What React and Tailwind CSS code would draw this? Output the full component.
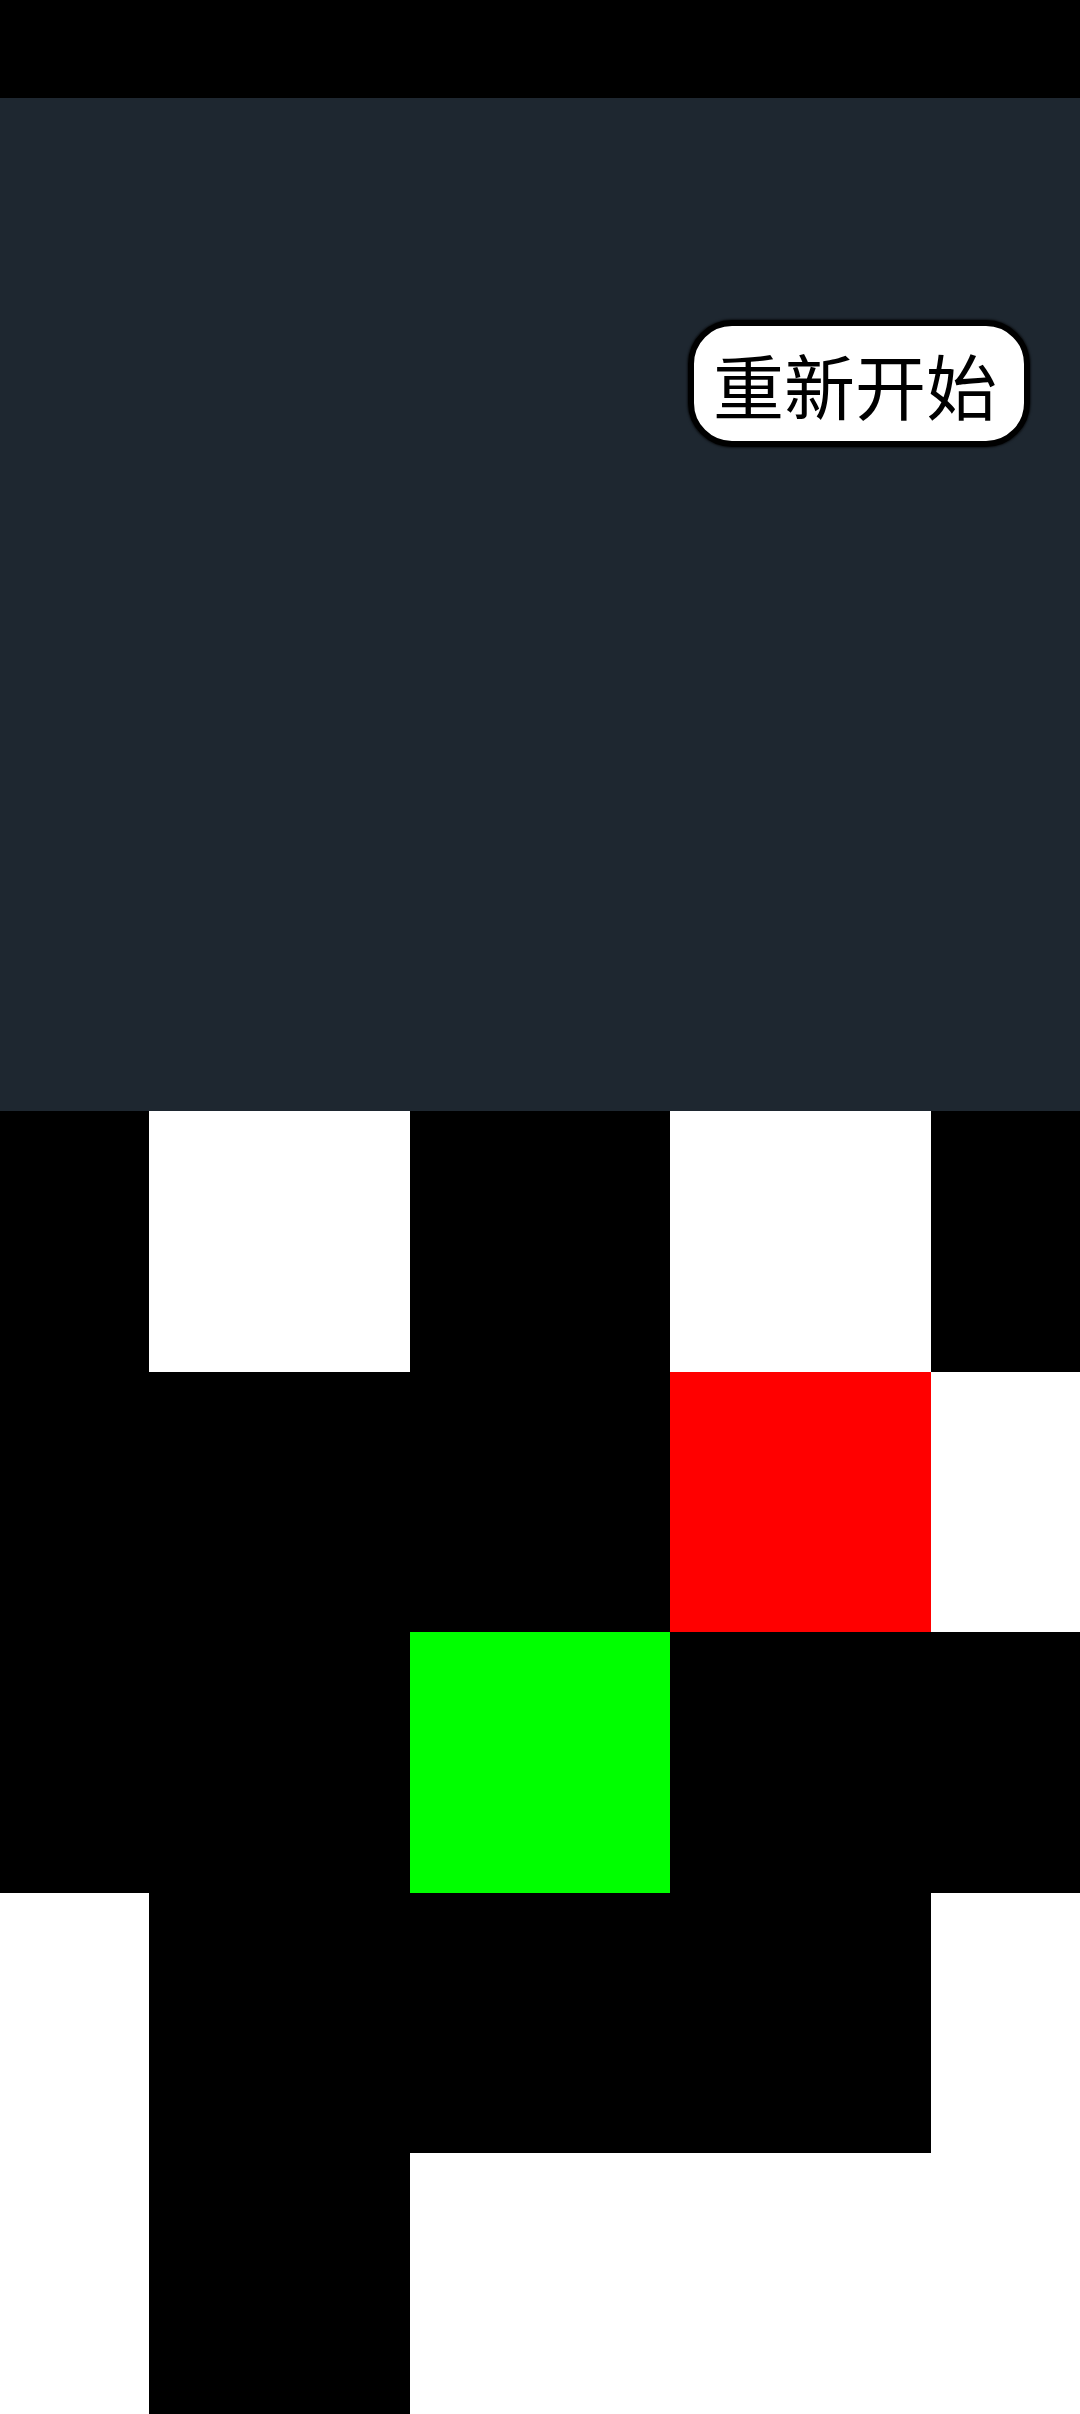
import React from 'react';

// 5x5 board: 0 = empty (black), 1 = wall (white), 2 = player (red), 3 = goal (green)
const board = [
  [0, 1, 0, 1, 0],
  [0, 0, 0, 2, 1],
  [0, 0, 3, 0, 0],
  [1, 0, 0, 0, 1],
  [1, 0, 1, 1, 1],
];

const cellClass = {
  0: 'bg-black',
  1: 'bg-white',
  2: 'bg-[#ff0000]',
  3: 'bg-[#00ff00]',
};

const App = () => {
  return (
    <div className="w-[1080px] h-[2414px] bg-black flex flex-col overflow-hidden" style={{ fontFamily: '"Noto Sans CJK SC", "Noto Sans", sans-serif' }}>
      {/* status bar */}
      <div className="h-[98px] bg-black shrink-0" />

      {/* header panel */}
      <div className="h-[1013px] bg-[#1e2730] shrink-0 flex justify-end items-start pt-[222px] pr-[50px]">
        <button className="w-[342px] h-[127px] bg-white border-[6px] border-black rounded-[44px] flex items-center justify-center text-black text-[71px] leading-none pr-[8px] shadow-[0_0_2px_1px_rgba(0,0,0,0.6)]">
          重新开始
        </button>
      </div>

      {/* board */}
      <div className="flex-1 flex justify-center overflow-hidden">
        <div className="grid grid-cols-[repeat(5,260.6px)] grid-rows-[repeat(5,260.6px)] shrink-0">
          {board.flatMap((row, r) =>
            row.map((v, c) => <div key={`${r}-${c}`} className={cellClass[v]} />)
          )}
        </div>
      </div>
    </div>
  );
};

export default App;
